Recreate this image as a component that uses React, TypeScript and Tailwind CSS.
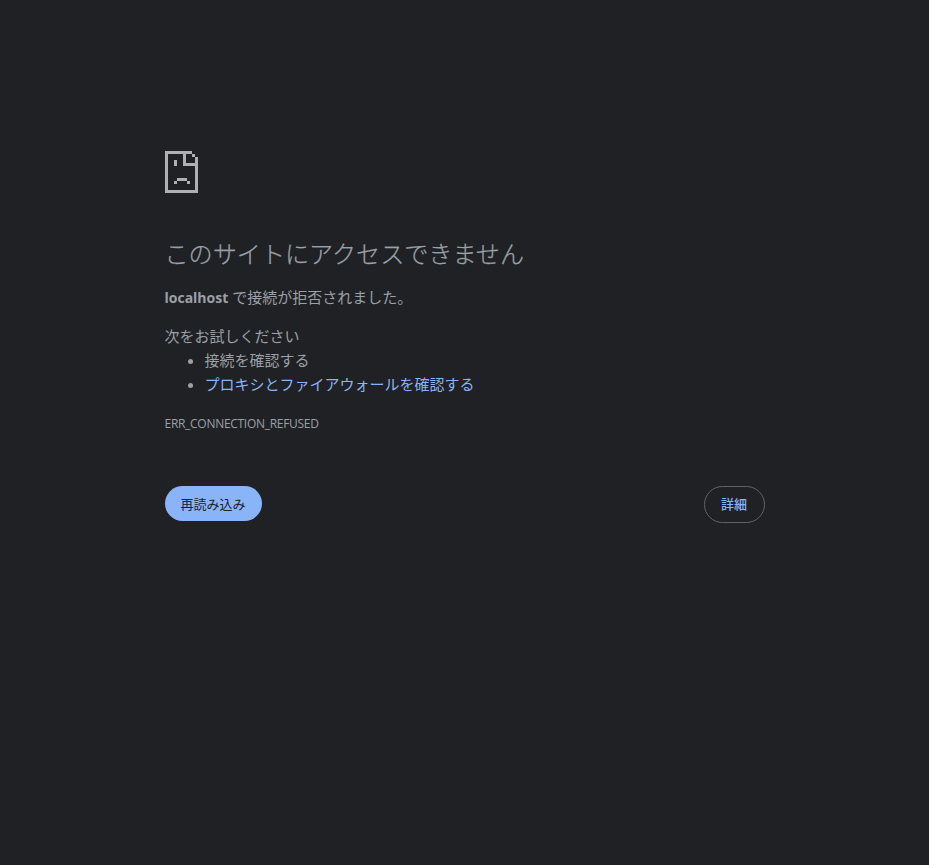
export default function App() {
  return (
    <main className="min-h-screen bg-[#202124] pt-[151px] font-['Open_Sans','Noto_Sans_CJK_JP',sans-serif] text-[15px] leading-6 text-[#9aa0a6]">
      <div className="mx-auto w-[600px]">
        <svg width="33" height="42" viewBox="0 0 33 42" shapeRendering="crispEdges" fill="#b0b0b0" className="block">
          <path d="M0 0H27V3H3V39H30V6H33V42H0Z" />
          <path d="M18 3H21V12H30V15H18ZM27 3H30V6H27Z" />
          <path d="M9 9H12V15H9ZM12 27H22V30H12ZM9 30H12V33H9ZM22 30H25V33H22Z" />
        </svg>
        <h1 className="mt-[46px] whitespace-nowrap text-[24.1px] font-light leading-[30px] [-webkit-text-stroke:0.25px_#9aa0a6]">このサイトにアクセスできません</h1>
        <p className="mt-4"><strong className="text-[14px] font-bold">localhost</strong> で接続が拒否されました。</p>
        <p className="mt-[14px]">次をお試しください</p>
        <ul className="list-disc pl-10">
          <li>接続を確認する</li>
          <li><a href="#" className="text-[#8ab4f8]">プロキシとファイアウォールを確認する</a></li>
        </ul>
        <p className="mt-4 text-[12px] tracking-[-0.29px]">ERR_CONNECTION_REFUSED</p>
        <div className="mt-[50px] flex items-start justify-between text-[13px]">
          <button className="h-[35px] w-[97px] rounded-full bg-[#8ab4f8] text-[#202124]">再読み込み</button>
          <button className="h-[37px] w-[61px] rounded-full border border-[#5f6368] pb-px font-medium text-[#8ab4f8]">詳細</button>
        </div>
      </div>
    </main>
  );
}
